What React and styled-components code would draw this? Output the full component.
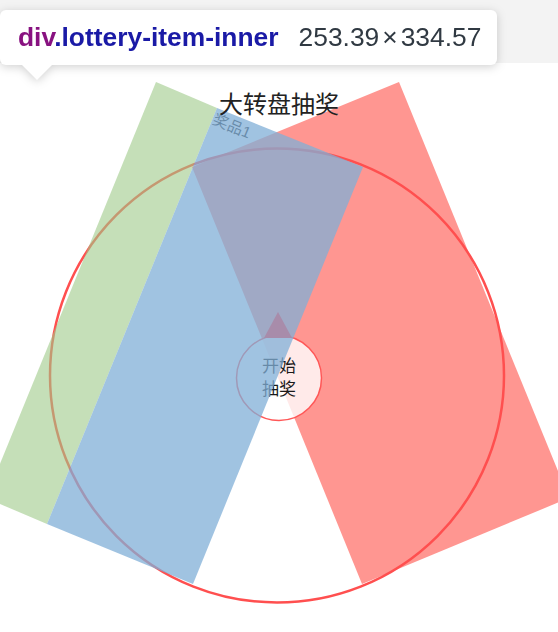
import React from 'react';
import styled, { createGlobalStyle } from 'styled-components';

const GlobalStyle = createGlobalStyle`
  html, body {
    margin: 0;
    background: #fff;
    font-family: "Liberation Sans", "Noto Sans CJK SC", sans-serif;
  }
`;

const Page = styled.div`
  position: relative;
  width: 558px;
  height: 632px;
  overflow: hidden;
  background: #fff;
`;

const TopBar = styled.div`
  height: 63px;
  background: #f3f3f3;
`;

const Stage = styled.div`
  position: relative;
  height: 569px;
`;

const Title = styled.h1`
  position: relative;
  z-index: 2;
  margin: 0;
  padding-top: 28px;
  text-align: center;
  font-size: 24px;
  line-height: 28px;
  font-weight: 400;
  color: #222;
`;

// the wheel itself is a drawing: rotated prize blocks, rim and start button
const WheelCanvas = styled.svg`
  position: absolute;
  inset: 0;
  z-index: 1;
  width: 558px;
  height: 569px;
`;

// devtools hover tooltip lying over the page
const Tooltip = styled.div`
  position: absolute;
  top: 10px;
  left: 0;
  width: 497px;
  height: 55px;
  box-sizing: border-box;
  padding-left: 18px;
  display: flex;
  align-items: center;
  gap: 20px;
  background: #fff;
  border-radius: 6px;
  filter: drop-shadow(0 2px 5px rgba(0, 0, 0, 0.18));
  font-size: 26.4px;
  line-height: 55px;
  white-space: nowrap;

  &::after {
    content: "";
    position: absolute;
    left: 22px;
    top: 55px;
    border-left: 15px solid transparent;
    border-right: 15px solid transparent;
    border-top: 15px solid #fff;
  }
`;

const Selector = styled.span`
  font-weight: 700;
  color: #1a1aa6;
`;

const Tag = styled.span`
  color: #881280;
`;

const Size = styled.span`
  color: #303942;
`;

const Times = styled.span`
  margin: 0 3px;
`;

const sectors = [
  { id: 'green', points: '156,82 217,108 47,524 -14,498', fill: 'rgb(158,202,137)', opacity: 0.6 },
  { id: 'blue', points: '217,108 363,167 193,584 47,524', fill: 'rgb(128,175,215)', opacity: 0.75 },
];

const App = () => {
  return (
    <Page>
      <GlobalStyle />
      <TopBar />
      <Stage>
        <Title>大转盘抽奖</Title>
        <WheelCanvas viewBox="0 63 558 569">
          <polygon points="399,82 192,167 362,584 569,498" fill="#ff9691" />
          <circle cx="277" cy="375.5" r="227" fill="none" stroke="#ff4f4f" strokeWidth="2.5" />
          <circle cx="279" cy="378" r="42.5" fill="rgba(255,255,255,0.8)" stroke="#ff5757" strokeWidth="1.5" />
          <text x="279" y="372" textAnchor="middle" fontSize="17" fill="#1a1a1a">开始</text>
          <text x="279" y="395" textAnchor="middle" fontSize="17" fill="#1a1a1a">抽奖</text>
          <text
            x="232"
            y="126"
            textAnchor="middle"
            dominantBaseline="central"
            fontSize="15.5"
            fill="#1f1f1f"
            transform="rotate(22.5 232 126)"
          >
            奖品1
          </text>
          {sectors.map((s) => (
            <polygon key={s.id} points={s.points} fill={s.fill} fillOpacity={s.opacity} />
          ))}
          <polygon points="278,312 264,338 292,338" fill="rgb(168,140,170)" />
        </WheelCanvas>
      </Stage>
      <Tooltip>
        <Selector>
          <Tag>div</Tag>.lottery-item-inner
        </Selector>
        <Size>
          253.39<Times>×</Times>334.57
        </Size>
      </Tooltip>
    </Page>
  );
};

export default App;
